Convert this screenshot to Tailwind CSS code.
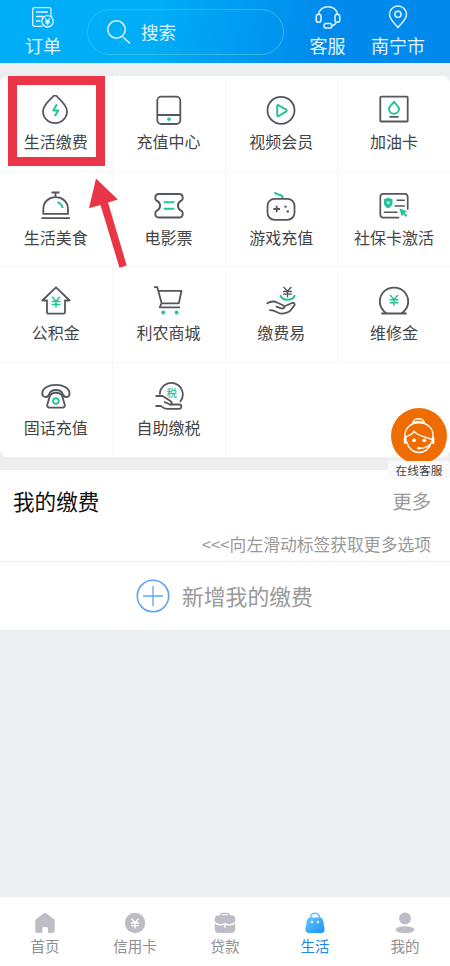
<!DOCTYPE html>
<html lang="zh-CN">
<head>
<meta charset="utf-8">
<title>生活</title>
<script src="https://cdn.jsdelivr.net/npm/@tailwindcss/browser@4"></script>
</head>
<body class="relative w-[450px] h-[966px] overflow-hidden bg-[#edeef0] font-['Noto_Sans_CJK_SC',sans-serif] flex flex-col">
<svg class="hidden">
  <symbol id="yen" viewBox="0 0 10 12"><path d="M1 .8 5 5.2 9 .8M5 5.2V11.5M.6 5.4H9.4M.6 8.4H9.4" fill="none" stroke="currentColor" stroke-width="1.5"/></symbol>
</svg>

<header class="h-[63px] shrink-0 flex text-[#e2f5fd] text-[18px] leading-6 bg-linear-[100deg] from-[#00adf7] from-35% to-[#008aec] to-72%">
  <div class="w-[86px] mr-px pt-[6px] flex flex-col items-center">
    <svg class="w-6 h-6 mb-[3px]" viewBox="0 0 24 24" fill="none" stroke="currentColor" stroke-width="1.3" stroke-linecap="round"><path d="M20 10V3.500Q20 1.700 18.200 1.700H3.500Q1.700 1.700 1.700 3.500V18.500Q1.700 20.300 3.500 20.300H11M5.500 6H16.500M5.500 10.500H12M5.500 15H9"/><circle cx="16.500" cy="15.300" r="5.700"/><path d="M14.500 12.800 16.500 15.200 18.500 12.800M16.500 15V18.600M14.600 15.300H18.400M14.600 16.900H18.400"/></svg>
    <span>订单</span>
  </div>
  <div class="w-[197px] h-[46px] mt-[9px] rounded-full border border-[#3fbfe4]/80 flex items-center pl-[19px]">
    <svg class="w-6 h-6" viewBox="0 0 24 24" fill="none" stroke="currentColor" stroke-width="1.5" stroke-linecap="round"><circle cx="9.500" cy="9.500" r="8.700"/><path d="m16.500 17.500 6 5.500"/></svg>
    <span class="ml-[10px] text-[17.5px]">搜索</span>
  </div>
  <div class="w-[87px] pt-[4px] flex flex-col items-center">
    <svg class="w-[26px] h-[26px] mb-[3px]" viewBox="0 0 26 26" fill="none" stroke="currentColor" stroke-width="1.5"><path d="M3.500 10.500C4.500 0 21.500 0 22.500 10.500M21.500 18C20 21 18.500 21.800 16.500 22"/><rect x="1.200" y="10.300" width="4.800" height="8" rx="2.400"/><rect x="20" y="10.300" width="4.800" height="8" rx="2.400"/><rect x="9" y="19.500" width="7.800" height="4.600" rx="2.200"/></svg>
    <span>客服</span>
  </div>
  <div class="w-[54px] pt-[4px] flex flex-col items-center whitespace-nowrap">
    <svg class="w-[26px] h-[26px] mb-[3px]" viewBox="0 0 26 26" fill="none" stroke="currentColor" stroke-width="1.500"><path d="M13 23.500C9 19 4.500 15 4.500 10.500A8.500 8.500 0 0 1 21.500 10.500C21.500 15 17 19 13 23.500Z"/><circle cx="13" cy="10.300" r="3.100"/></svg>
    <span>南宁市</span>
  </div>
</header>

<main class="flex-1 flex flex-col pt-[13px]">
  <section class="h-[381px] shrink-0 rounded-[8px] overflow-hidden bg-[#f7f7f8] grid grid-cols-4 grid-rows-4 gap-px text-[#444] text-[16px] leading-6 text-center [&>div]:bg-white [&>div]:pt-[19px] [&>div]:flex [&>div]:flex-col [&>div]:items-center [&_span]:mt-[4px] [&>div>svg]:w-[30px] [&>div>svg]:h-[30px] [&>div>svg]:shrink-0 [&>div>svg]:text-[#55575c]">
    <div><svg viewBox="0 0 30 30" fill="none" stroke="currentColor" stroke-width="1.800" stroke-linejoin="round" stroke-linecap="round"><path d="M12.500 1Q14 -.5 15.500 1C19 5 26 10 26 16.200A12 12 0 0 1 2 16.200C2 10 9 5 12.500 1Z"/><path d="M15.500 10 12.300 15.500H17.300L14.200 20.500" stroke="#25c39a" stroke-width="2"/></svg><span>生活缴费</span></div>
    <div><svg viewBox="0 0 30 30" fill="none" stroke="currentColor" stroke-width="1.800"><rect x="3.300" y="1.700" width="23" height="27.300" rx="4"/><path d="M3.500 20H26"/><circle cx="15" cy="24.300" r="1.800" fill="#25c39a" stroke="none"/></svg><span>充值中心</span></div>
    <div><svg viewBox="0 0 30 30" fill="none" stroke="currentColor" stroke-width="1.800" stroke-linejoin="round"><circle cx="15" cy="15.300" r="13.500"/><path d="M11.200 11Q11.200 9.500 12.700 10.300L20.300 14.700Q21.300 15.500 20.300 16.300L12.700 21Q11.200 21.500 11.200 20Z" stroke="#25c39a" stroke-width="2"/></svg><span>视频会员</span></div>
    <div><svg viewBox="0 0 30 30" fill="none" stroke="currentColor" stroke-width="1.800" stroke-linejoin="round"><rect x="1.300" y="1.700" width="27.400" height="24.800" rx=".8"/><path d="M15 6.800C17 9.500 20 11.500 20 13.700A5 5 0 0 1 10 13.700C10 11.500 13 9.500 15 6.800Z" stroke="#25c39a" stroke-width="2"/><path d="M10.500 21.800H19.500"/></svg><span>加油卡</span></div>

    <div><svg viewBox="0 0 30 30" fill="none" stroke="currentColor" stroke-width="1.800"><path d="M10.500 1.500H18.500M14.500 1.500V6M2.300 22.800V18.500C2.300 2 27 2 27 18.500V22.800ZM.4 27.200H29"/><path d="M16.500 11.300Q20.700 12.700 21.700 17" stroke="#25c39a" stroke-width="2"/></svg><span>生活美食</span></div>
    <div><svg viewBox="0 0 30 30" fill="none" stroke="currentColor" stroke-width="1.900" stroke-linejoin="round"><path d="M5 3H25Q28.700 3 28.700 6.500V7.500Q28.700 9 27.300 9.700C22.800 12 22.800 17.500 27.300 19.800Q28.700 20.500 28.700 22V23Q28.700 26.500 25 26.500H5Q1.300 26.500 1.300 23V22Q1.300 20.500 2.700 19.800C7.200 17.500 7.200 12 2.700 9.700Q1.300 9 1.300 7.500V6.500Q1.300 3 5 3Z"/><path d="M9.800 11.200H20.400M9.800 17.800H20.400" stroke="#25c39a"/></svg><span>电影票</span></div>
    <div><svg viewBox="0 0 30 30" fill="none" stroke="currentColor" stroke-width="1.800"><path d="M9 1.200C9.500 5.500 16 1.500 16.800 7" stroke="#25c39a" stroke-width="2"/><rect x="1.500" y="7.900" width="27" height="20.900" rx="7"/><path d="M10.700 14.700V21.300M7.400 18H14"/><g fill="currentColor" stroke="none"><circle cx="19.500" cy="15.600" r="1.200"/><circle cx="21.800" cy="20.500" r="1.200"/></g></svg><span>游戏充值</span></div>
    <div><svg viewBox="0 0 30 30" fill="none" stroke="currentColor" stroke-width="1.700" stroke-linecap="round"><path d="M19.500 26.700H4.500Q1.300 26.700 1.300 23.500V6Q1.300 2.800 4.500 2.800H25.500Q28.700 2.800 28.700 6V18"/><path d="M18 9.300H25.300M16 15H25.300M5.300 21.200H18" stroke-width="1.400"/><path d="M9.200 6.700 13.500 8.300V12.500Q13 15.700 9.200 17.300 5.400 15.700 4.900 12.500V8.300Z" fill="#25c39a" stroke="none"/><circle cx="9.200" cy="11.800" r="1.500" fill="#c9f2e6" stroke="none"/><path d="M20.300 17.200 28.300 20.500 25.500 21.700 28.300 24.500 26.800 26 24.200 23.200 22.800 25.700Z" fill="#25c39a" stroke="none"/></svg><span>社保卡激活</span></div>

    <div><svg viewBox="0 0 30 30" fill="none" stroke="currentColor" stroke-width="1.800" stroke-linejoin="round"><path d="M15 1.300 28.700 14.500H24V26.300Q24 27.700 22.600 27.700H7.400Q6 27.700 6 26.300V14.500H1.300Z"/><use href="#yen" x="10" y="10" width="10" height="12" color="#25c39a"/></svg><span>公积金</span></div>
    <div><svg viewBox="0 0 30 30" fill="none" stroke="currentColor" stroke-width="1.800" stroke-linejoin="round"><path d="M0 1.200H3.300L7.700 17.500M4.300 4.800H27.500L24.800 17.300H7.500L5.700 21.300H26"/><g fill="#25c39a" stroke="none"><circle cx="9.200" cy="26.500" r="1.900"/><circle cx="22.600" cy="26.500" r="1.900"/></g></svg><span>利农商城</span></div>
    <div><svg viewBox="0 0 30 30" fill="none" stroke="currentColor" stroke-width="1.800" stroke-linejoin="round" stroke-linecap="round"><use href="#yen" x="17" y=".5" width="9" height="11"/><path d="M14.700 10C17 15 26 15 28.500 10" stroke="#25c39a" stroke-width="2"/><path d="M1.200 17.300C5 15 9 15.300 11.500 16.700L17 19.300C20 21.300 17.500 23.200 14.500 22.200L10.500 20.700M18.500 20.300L25.500 17.200C29 16.300 29.500 18.700 27.500 20.500L24.500 24.500C23 26.500 17.500 27.800 14.500 27.500C10.500 26.500 9 24 4 24.200"/></svg><span>缴费易</span></div>
    <div><svg viewBox="0 0 30 30" fill="none" stroke="currentColor" stroke-width="1.900"><path d="M7.500 27.300C-1 21.500-.5 12 4 6.500 9.500 0 20.500 0 26 6.500 30.500 12 31 21.500 22.500 27.300M2.300 27.500H27.700"/><use href="#yen" x="10" y="8.300" width="10" height="12" color="#25c39a"/></svg><span>维修金</span></div>

    <div><svg class="-mt-px mb-px" viewBox="0 0 30 30" fill="none" stroke="currentColor" stroke-width="1.900" stroke-linejoin="round"><path d="M5 16Q1.300 16 1.300 12.500C1.300 1 28.500 1 28.500 12.500Q28.500 16 25 16 22.500 16 21.500 12.500 20 9 15 9 10 9 8.500 12.500 7.500 16 5 16Z"/><path d="M9 14.500Q11 11.800 15 11.800T21 14.500L23.700 23.500Q24.300 26.600 21.500 26.600H8.500Q5.700 26.600 6.300 23.500Z"/><circle cx="14.900" cy="20" r="2.800" stroke="#25c39a" stroke-width="1.900"/></svg><span class="relative -top-px">固话充值</span></div>
    <div><svg class="-mt-px mb-px" viewBox="0 0 30 30" fill="none" stroke="currentColor" stroke-width="1.800" stroke-linejoin="round"><path d="M5.800 13.500A11.500 11.500 0 1 1 26 21"/><text x="17.800" y="15.500" text-anchor="middle" font-size="10.500" font-weight="500" fill="#25c39a" stroke="none">税</text><path d="M1.500 15H8.500L16.500 20Q18.500 22 17 24L10 20.700M17 23.500H25.500Q27.300 23.500 27.300 25.500T25.500 27.800H13.500Q9.500 27.800 7 25H1.500"/></svg><span class="relative -top-px">自助缴税</span></div>
    <div class="col-span-2"></div>
  </section>

  <section class="mt-[13px] h-[160px] shrink-0 bg-white">
    <div class="h-[92px] border-b border-[#ededee] pl-[13px] pr-[19px]">
      <div class="h-[62px] flex items-center justify-between"><h2 class="text-[21.6px] text-[#111]">我的缴费</h2><span class="text-[19.3px] text-[#999]">更多</span></div>
      <p class="text-right text-[16.8px] leading-[24px] text-[#999]">&lt;&lt;&lt;向左滑动标签获取更多选项</p>
    </div>
    <div class="h-[68px] flex items-center pl-[136px] gap-[12px]">
      <svg class="w-[34px] h-[34px]" viewBox="0 0 34 34" fill="none" stroke="#5da5f2"><circle cx="17" cy="17" r="15.700" stroke-width="1.600"/><path d="M17 7V27M7 17H27" stroke-width="1.300"/></svg>
      <span class="text-[21.8px] text-[#999]">新增我的缴费</span>
    </div>
  </section>
</main>

<nav class="h-[69px] shrink-0 bg-white grid grid-cols-5 text-[14.5px] leading-5 text-[#8e8e91] [&>div]:flex [&>div]:flex-col [&>div]:items-center [&>div]:pt-[15px] [&_span]:mt-[2px] [&_svg]:w-[22px] [&_svg]:h-[22px] [&_svg]:text-[#bebdc6]">
  <div><svg viewBox="0 0 22 22"><path d="M9.500 1.500Q11 .5 12.500 1.500L19.700 7Q20.700 8 20.700 9V18.500Q20.700 21 18.200 21H14V16.500Q14 15 12.500 15H9.800Q8.300 15 8.300 16.500V21H3.800Q1.300 21 1.300 18.500V9Q1.300 8 2.300 7Z" fill="currentColor"/></svg><span>首页</span></div>
  <div><svg viewBox="0 0 22 22"><circle cx="11" cy="11" r="10.200" fill="currentColor"/><use href="#yen" x="6.500" y="6" width="9" height="11" color="white"/></svg><span>信用卡</span></div>
  <div><svg viewBox="0 0 22 22"><path d="M7 4V3Q7 1.500 8.500 1.500H13.500Q15 1.500 15 3V4" fill="none" stroke="currentColor" stroke-width="1.700"/><rect x=".8" y="3.300" width="20.400" height="17.700" rx="4" fill="currentColor"/><path d="M.5 10.200C3 13 6 13.200 8.500 12.500L11 11.700 13.500 12.500C16 13.200 19 13 21.500 10.200M11 12V15.700" fill="none" stroke="white" stroke-width="1.500"/></svg><span>贷款</span></div>
  <div class="text-[#2187ed]"><svg viewBox="0 0 22 22"><defs><linearGradient id="bag" x1="0" y1="0" x2="1" y2="1"><stop stop-color="#6bc5fc"/><stop offset="1" stop-color="#1493fa"/></linearGradient></defs><path d="M6.500 7V5.500C6.500-.2 15.500-.2 15.500 5.500V7" fill="none" stroke="#65bffa" stroke-width="1.700"/><path d="M6 5.500H16Q18.500 5.500 19 8L20.500 16.500Q21 21 17 21H5Q1 21 1.500 16.500L3 8Q3.500 5.500 6 5.500Z" fill="url(#bag)"/><circle cx="8" cy="10" r="1.200" fill="white"/><circle cx="14" cy="10" r="1.200" fill="white"/></svg><span>生活</span></div>
  <div><svg viewBox="0 0 22 22" fill="currentColor"><circle cx="11" cy="6.500" r="5.900"/><ellipse cx="11" cy="17.700" rx="9.400" ry="3.500"/></svg><span>我的</span></div>
</nav>

<!-- Callout frame and pointer over the first tile -->
<div class="absolute left-[8px] top-[76px] w-[97px] h-[90px] border-[9px] border-[#e93546]"></div>
<svg class="absolute left-[85px] top-[175px] w-[45px] h-[95px]" viewBox="85 175 45 95"><path d="M96 178.500 117.800 199.500 108 202.500 126.700 265.500 119.500 267.700 100.500 205 89 208.300Z" fill="#e93546"/></svg>

<!-- Floating customer service button -->
<div class="absolute left-[388px] top-[408px] w-[62px] h-[72px]">
  <svg class="absolute left-[3px] top-0 w-[56px] h-[56px]" viewBox="0 0 56 56" fill="none" stroke="white" stroke-width="1.300" stroke-linecap="round"><circle cx="28" cy="28" r="28" fill="#ee6c00" stroke="none"/><path d="M21.700 15C21.700 9.300 33.500 9.300 33.500 15M23 14.200Q28 12.800 32.500 14.200M14 29C12.500 10 43.500 10 42 29M15.800 34C19 48 37 48 40.500 34M15.500 28.500C20 27 23 25.500 22.800 22.800C26 28 34 28.500 40.500 31.500M40.500 35Q36 40 29.500 40.300"/><path d="M14.200 30V34.500M42 30V34.500" stroke-width="2.800"/><g fill="white" stroke="none"><circle cx="23" cy="32.300" r="1.900"/><circle cx="33.300" cy="32.300" r="1.900"/><ellipse cx="28" cy="40.300" rx="2" ry="1.300"/></g></svg>
  <div class="absolute inset-x-0 top-[53px] h-[18px] rounded-[3px] bg-[#fafafa] text-center text-[11.7px] leading-[18px] text-[#444]">在线客服</div>
</div>
</body>
</html>
